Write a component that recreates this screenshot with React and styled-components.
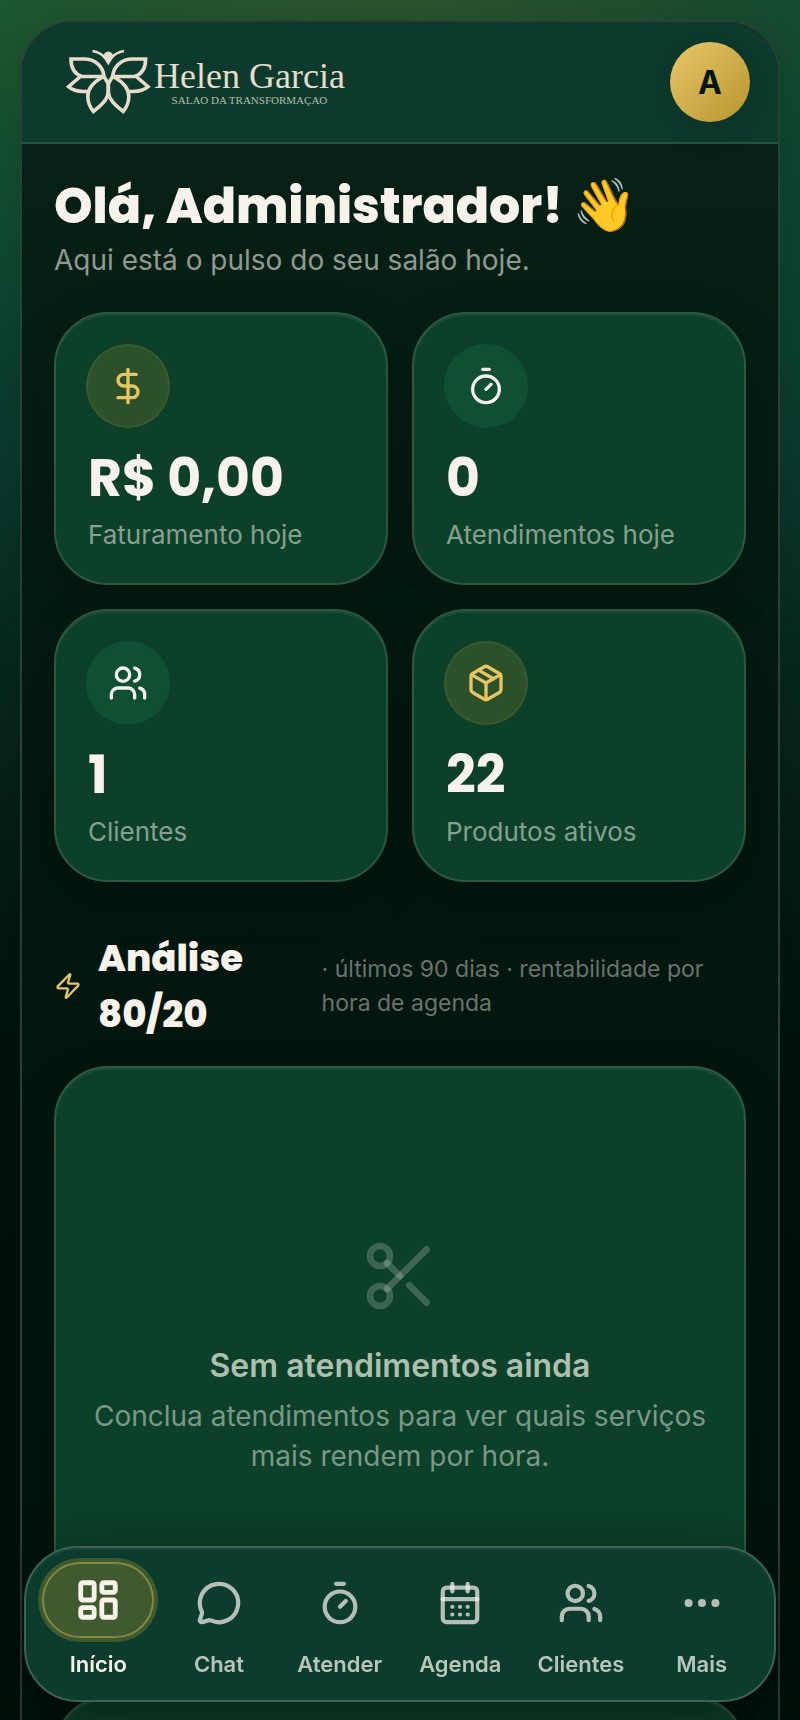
import React from 'react';
import styled, { createGlobalStyle, css } from 'styled-components';
import {
    CalendarDays,
    DollarSign,
    Ellipsis,
    LayoutDashboard,
    MessageCircle,
    Package,
    Scissors,
    Timer,
    Users,
    Zap,
} from 'lucide-react';

const stats = [
    { label: 'Faturamento hoje', value: 'R$ 0,00', icon: DollarSign, gold: true },
    { label: 'Atendimentos hoje', value: '0', icon: Timer },
    { label: 'Clientes', value: '1', icon: Users },
    { label: 'Produtos ativos', value: '22', icon: Package, gold: true },
];

const tabs = [
    { label: 'Início', icon: LayoutDashboard, active: true },
    { label: 'Chat', icon: MessageCircle },
    { label: 'Atender', icon: Timer },
    { label: 'Agenda', icon: CalendarDays },
    { label: 'Clientes', icon: Users },
    { label: 'Mais', icon: Ellipsis },
];

function Butterfly() {
    return (
        <svg width="86" height="66" viewBox="0 0 86 66" fill="none" stroke="#e6dccb" strokeWidth="3.6">
            <path d="M26.500 2 Q35 3.500 39 9 M58 2 Q49.500 3.500 45.500 9" strokeWidth="2.400" />
            <path d="M42.300 16.500 L38 9.500 A4.800 4.800 0 1 1 46.600 9.500 Z" fill="#e6dccb" stroke="none" />
            <g id="wing">
                <path d="M5 10 L18 10 C29 10 37 17 38 27.500 L16 27.500 C8 25 5 18 5 10 Z" />
                <path d="M15 27 L2.500 37.700 C8 42.500 14 43.500 24 42" />
                <path d="M36.500 28 C26 34 21.500 40 21.800 48 C22 54 24.500 59 27.500 62.500 C34 57 42.300 51 42.300 42 L42.300 35 Q41 32 37.500 27" />
            </g>
            <use href="#wing" transform="matrix(-1 0 0 1 84.600 0)" />
        </svg>
    );
}

export default function App() {
    return (
        <>
            <GlobalStyle />
            <Page>
                <Shell>
                    <Header>
                        <Brand href="#">
                            <Butterfly />
                            <BrandText>
                                <BrandName>Helen Garcia</BrandName>
                                <BrandTagline>SALAO DA TRANSFORMAÇAO</BrandTagline>
                            </BrandText>
                        </Brand>
                        <Avatar type="button">A</Avatar>
                    </Header>
                    <Content>
                        <Title>
                            Olá, Administrador! <Wave>👋</Wave>
                        </Title>
                        <Subtitle>Aqui está o pulso do seu salão hoje.</Subtitle>
                        <StatGrid>
                            {stats.map(({ label, value, icon: Icon, gold }) => (
                                <StatCard key={label}>
                                    <StatIcon $gold={gold}>
                                        <Icon size={40} />
                                    </StatIcon>
                                    <StatValue>{value}</StatValue>
                                    <StatLabel>{label}</StatLabel>
                                </StatCard>
                            ))}
                        </StatGrid>
                        <SectionHead>
                            <Zap size={28} />
                            <SectionTitle>Análise 80/20</SectionTitle>
                            <SectionNote>· últimos 90 dias · rentabilidade por hora de agenda</SectionNote>
                        </SectionHead>
                        <EmptyCard>
                            <Scissors size={80} />
                            <EmptyTitle>Sem atendimentos ainda</EmptyTitle>
                            <EmptyText>Conclua atendimentos para ver quais serviços mais rendem por hora.</EmptyText>
                        </EmptyCard>
                        <NextCard />
                    </Content>
                </Shell>
                <TabBar>
                    {tabs.map(({ label, icon: Icon, active }) => (
                        <Tab key={label} type="button" $active={active}>
                            <TabIcon $active={active}>
                                <Icon size={46} strokeWidth={active ? 2.5 : 2.2} />
                            </TabIcon>
                            {label}
                        </Tab>
                    ))}
                </TabBar>
            </Page>
        </>
    );
}

const GlobalStyle = createGlobalStyle`
    * {
        box-sizing: border-box;
    }

    body {
        margin: 0;
        background: #00100a;
        color: #f7f3ea;
        font-family: Inter, sans-serif;
    }

    h1, h2, h3, p {
        margin: 0;
    }
`;

const card = css`
    border: 2px solid #2a5a42;
    border-radius: 54px;
    background: #0c4029;
    box-shadow: inset 0 2px 0 rgba(255, 255, 255, 0.06), 0 16px 48px rgba(0, 0, 0, 0.2);
`;

const Page = styled.div`
    display: flex;
    flex-direction: column;
    height: 100vh;
    padding: 20px 20px 0;
    overflow: hidden;
    background:
        radial-gradient(ellipse 60% 14% at 50% 0%, rgba(100, 105, 42, 0.3), transparent),
        radial-gradient(ellipse 90% 22% at 0% 0%, rgba(34, 100, 48, 0.5), transparent),
        linear-gradient(180deg, #124a30 0%, #0b4231 18%, #0a392d 27%, #07291f 38%, #031b13 50%, #01120c 62%, #00100a 75%);
`;

const Shell = styled.div`
    display: flex;
    flex: 1;
    flex-direction: column;
    min-height: 0;
    border: 2px solid #2a3f35;
    border-bottom: none;
    border-radius: 54px 54px 0 0;
    overflow: hidden;
    background: linear-gradient(180deg, #082217 0%, #062015 9%, #041c13 24%, #02170f 48%, #01130d 100%);
    box-shadow: 0 0 48px rgba(0, 0, 0, 0.15);
`;

const Header = styled.header`
    display: flex;
    flex-shrink: 0;
    align-items: center;
    justify-content: space-between;
    padding: 20px 28px 20px 44px;
    border-bottom: 2px solid #255445;
    background: #0c3a2d;
`;

const Brand = styled.a`
    display: flex;
    align-items: center;
    gap: 2px;
    color: #e6dccb;
    text-decoration: none;
`;

const BrandText = styled.span`
    display: flex;
    flex-direction: column;
    align-items: center;
    font-family: 'Liberation Serif', serif;
`;

const BrandName = styled.span`
    font-size: 36px;
    line-height: 36px;
`;

const BrandTagline = styled.span`
    color: #b9bba9;
    font-size: 11px;
    line-height: 12px;
`;

const Avatar = styled.button`
    width: 80px;
    height: 80px;
    padding: 0;
    border: none;
    border-radius: 50%;
    background: linear-gradient(135deg, #e6c76a, #b8952e);
    box-shadow: 0 8px 32px rgba(0, 0, 0, 0.14);
    color: #03150f;
    font-family: inherit;
    font-size: 32px;
    font-weight: 700;
`;

const Content = styled.main`
    flex: 1;
    min-height: 0;
    padding: 32px 32px 0;
    overflow-y: auto;
    scrollbar-width: none;
`;

const Title = styled.h1`
    font-family: Poppins, Inter, sans-serif;
    font-size: 49px;
    font-weight: 800;
    line-height: 60px;
`;

const Wave = styled.span`
    font-size: 52px;
    line-height: 1;
`;

const Subtitle = styled.p`
    margin-top: 4px;
    color: #8f9a90;
    font-size: 28px;
    line-height: 40px;
`;

const StatGrid = styled.section`
    display: grid;
    grid-template-columns: 1fr 1fr;
    gap: 24px;
    margin-top: 32px;
`;

const StatCard = styled.article`
    ${card}
    padding: 32px 32px 30px;
`;

const StatIcon = styled.div`
    display: flex;
    align-items: center;
    justify-content: center;
    width: 80px;
    height: 80px;
    border-radius: 50%;
    background: ${({ $gold }) => ($gold ? '#2c5129' : '#0f5033')};
    box-shadow: 0 0 0 2px ${({ $gold }) => ($gold ? '#395a31' : '#0f5033')};
    color: ${({ $gold }) => ($gold ? '#e6c562' : '#f7f3ea')};
`;

const StatValue = styled.p`
    margin-top: 22px;
    font-family: Poppins, Inter, sans-serif;
    font-size: 52px;
    font-weight: 700;
    line-height: 60px;
`;

const StatLabel = styled.p`
    margin-top: 9px;
    color: #86a08f;
    font-size: 26px;
    line-height: 36px;
`;

const SectionHead = styled.div`
    display: flex;
    align-items: center;
    gap: 16px;
    margin: 48px 0 24px;

    svg {
        flex-shrink: 0;
        color: #e6c562;
    }
`;

const SectionTitle = styled.h2`
    flex: 0 0 30%;
    font-family: Poppins, Inter, sans-serif;
    font-size: 37px;
    font-weight: 800;
    line-height: 56px;
`;

const SectionNote = styled.span`
    color: #69746c;
    font-size: 23px;
    line-height: 34px;
`;

const EmptyCard = styled.section`
    ${card}
    display: flex;
    flex-direction: column;
    align-items: center;
    min-height: 606px;
    padding: 168px 32px 0;
    text-align: center;

    svg {
        color: rgba(255, 255, 255, 0.2);
    }
`;

const EmptyTitle = styled.h3`
    margin-top: 28px;
    color: #adc0b0;
    font-size: 32px;
    font-weight: 600;
    line-height: 44px;
`;

const EmptyText = styled.p`
    margin-top: 8px;
    color: #7a9886;
    font-size: 28px;
    line-height: 40px;
`;

const NextCard = styled.section`
    ${card}
    height: 200px;
    margin-top: 24px;
`;

const TabBar = styled.nav`
    position: fixed;
    right: 24px;
    bottom: 18px;
    left: 24px;
    display: grid;
    grid-template-columns: repeat(6, 1fr);
    height: 156px;
    padding: 14px 12px 0;
    border: 2px solid #3a6354;
    border-radius: 54px;
    background: #0c3c2e;
    box-shadow: inset 0 2px 0 rgba(255, 255, 255, 0.04), 0 16px 64px rgba(0, 0, 0, 0.45);
`;

const Tab = styled.button`
    display: flex;
    flex-direction: column;
    align-items: center;
    gap: 12px;
    padding: 0;
    border: none;
    background: none;
    color: ${({ $active }) => ($active ? '#f7f3ea' : '#b8c5b9')};
    font-family: inherit;
    font-size: 22px;
    font-weight: 600;
    line-height: 28px;

    svg {
        color: ${({ $active }) => ($active ? '#f7f3ea' : 'rgba(247, 243, 234, 0.72)')};
    }
`;

const TabIcon = styled.span`
    display: flex;
    align-items: center;
    justify-content: center;
    width: 112px;
    height: 76px;
    padding-top: ${({ $active }) => ($active ? 0 : '6px')};
    border-radius: 38px;
    ${({ $active }) =>
        $active &&
        css`
            border: 2px solid #87853f;
            background: #405a30;
            box-shadow: 0 0 0 4px #3b5a2f;
        `}
`;
